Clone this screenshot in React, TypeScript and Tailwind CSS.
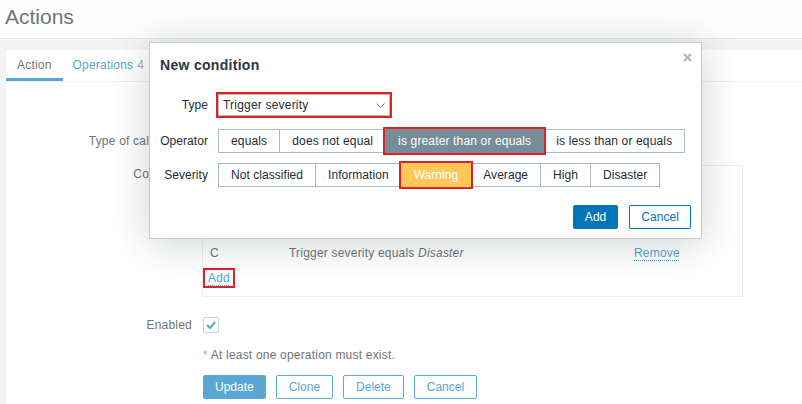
import React from 'react';

const operators = ['equals', 'does not equal', 'is greater than or equals', 'is less than or equals'];
const severities = ['Not classified', 'Information', 'Warning', 'Average', 'High', 'Disaster'];

function Segmented({ items, selected, selectedClass }: { items: string[]; selected: number; selectedClass: string }) {
    return (
        <div className="flex">
            {items.map((item, i) => (
                <div
                    key={item}
                    className={
                        'flex h-[24px] items-center border px-[12px] ' +
                        (i > 0 ? '-ml-px ' : '') +
                        (i === selected
                            ? 'relative z-10 outline-2 outline-[#e41e26] ' + selectedClass
                            : 'border-[#acbbc2] bg-white text-[#1f2c33]')
                    }
                >
                    {item}
                </div>
            ))}
        </div>
    );
}

export default function App() {
    return (
        <div className="relative h-[404px] w-[802px] overflow-hidden bg-[#f2f4f5] font-['Liberation_Sans',Arial,sans-serif] text-[12px] tracking-[0.2px] text-[#6d767a]">
            {/* Page header */}
            <header className="flex h-[39px] items-center border-b border-[#e6e9eb] bg-[#fdfdfd] pl-[5px] pb-[4px] text-[21px] tracking-normal">
                Actions
            </header>

            <div className="pl-[6px] pt-[11px]">
                <div className="h-[360px] bg-white">
                    {/* Tabs */}
                    <div className="flex h-[32px] border-b border-[#eef0f2]">
                        <div className="flex items-center border-b-[3px] border-[#5aa5d1] px-[11px] pt-[2px]">Action</div>
                        <div className="flex items-center pl-[10px] pb-[1px] text-[#5aa5d1]">
                            Operations<span className="ml-[4px] text-[#a3abb0]">4</span>
                        </div>
                    </div>

                    {/* Form (rows hidden behind the dialog are kept as empty space) */}
                    <div className="flex flex-col pt-[15px]">
                        <div className="h-[22px]" />
                        <div className="mt-[11px] flex h-[22px] items-center">
                            <div className="w-[186px] text-right">Type of calculation</div>
                        </div>
                        <div className="mt-[13px] flex">
                            <div className="w-[186px] text-right leading-[18px]">Conditions</div>
                            <div className="ml-[10px] w-[541px] border border-[#eceff0] pb-[8px]">
                                <div className="h-[74px]" />
                                <div className="grid h-[26px] grid-cols-[79px_345px_1fr] items-center pl-[7px]">
                                    <span>C</span>
                                    <span>
                                        Trigger severity equals <i>Disaster</i>
                                    </span>
                                    <span className="text-[#5aa5d1] underline decoration-dotted underline-offset-[3px]">Remove</span>
                                </div>
                                <div className="mt-[2px]">
                                    <span className="inline-block border-2 border-[#e41e26] px-[3px] leading-[16px] text-[#5aa5d1] underline decoration-dotted underline-offset-[3px]">
                                        Add
                                    </span>
                                </div>
                            </div>
                        </div>

                        <div className="mt-[20px] flex h-[16px] items-center">
                            <div className="w-[186px] text-right">Enabled</div>
                            <div className="ml-[11px] flex h-[16px] w-[16px] items-center justify-center rounded-[2px] border border-[#c9d3d7] bg-white">
                                <svg width="10" height="8" viewBox="0 0 10 8">
                                    <path d="M1 4l3 3 5-6" fill="none" stroke="#5aa5d1" strokeWidth="2" />
                                </svg>
                            </div>
                        </div>

                        <div className="mt-[13px] ml-[197px] leading-[18px]">
                            <span className="text-[#ed9393]">*</span> At least one operation must exist.
                        </div>

                        <div className="mt-[11px] ml-[197px] flex gap-[10px] tracking-normal">
                            <button className="h-[24px] rounded-[2px] bg-[#5aa6d4] px-[12px] text-white">Update</button>
                            <button className="h-[24px] rounded-[2px] border border-[#5aa6d4] bg-white px-[12px] text-[#5aa6d4]">Clone</button>
                            <button className="h-[24px] rounded-[2px] border border-[#5aa6d4] bg-white px-[12px] text-[#5aa6d4]">Delete</button>
                            <button className="h-[24px] rounded-[2px] border border-[#5aa6d4] bg-white px-[12px] text-[#5aa6d4]">Cancel</button>
                        </div>
                    </div>
                </div>
            </div>

            {/* Dialog */}
            <div className="absolute left-[149px] top-[42px] w-[553px] border border-[#c6ced4] bg-white px-[10px] pt-[13px] pb-[9px] tracking-[0.05px] text-[#1f2c33] shadow-[0_4px_36px_rgba(31,44,51,0.22)]">
                <button className="absolute right-[9px] top-[10px]">
                    <svg width="9" height="9" viewBox="0 0 9 9">
                        <path d="M1 1l7 7M8 1L1 8" stroke="#aab5bb" strokeWidth="2" />
                    </svg>
                </button>
                <h4 className="text-[14px] font-bold leading-[18px] tracking-[0.3px] text-[#2a3840]">New condition</h4>

                <div className="mt-[20px] flex items-center">
                    <div className="w-[48px] text-right">Type</div>
                    <div className="ml-[10px] flex h-[22px] w-[172px] items-center justify-between border border-[#acbbc2] pl-[4px] pr-[4px] outline-2 outline-[#e41e26]">
                        <span className="tracking-[0.2px]">Trigger severity</span>
                        <svg width="9" height="5" viewBox="0 0 9 5">
                            <path d="M0.5 0.5l4 4 4-4" fill="none" stroke="#768d99" strokeWidth="1" />
                        </svg>
                    </div>
                </div>

                <div className="mt-[13px] flex items-center">
                    <div className="w-[48px] text-right">Operator</div>
                    <div className="ml-[10px] tracking-[0.15px]">
                        <Segmented items={operators} selected={2} selectedClass="border-[#768d99] bg-[#768d99] text-white" />
                    </div>
                </div>

                <div className="mt-[10px] flex items-center">
                    <div className="w-[48px] text-right">Severity</div>
                    <div className="ml-[10px]">
                        <Segmented items={severities} selected={2} selectedClass="border-[#ffc859] bg-[#ffc859] text-white" />
                    </div>
                </div>

                <div className="mt-[18px] flex justify-end gap-[11px]">
                    <button className="h-[24px] rounded-[2px] border border-[#0275b8] bg-[#0275b8] px-[11px] text-white">Add</button>
                    <button className="h-[24px] rounded-[2px] border border-[#0275b8] bg-white px-[11px] text-[#0275b8]">Cancel</button>
                </div>
            </div>
        </div>
    );
}
